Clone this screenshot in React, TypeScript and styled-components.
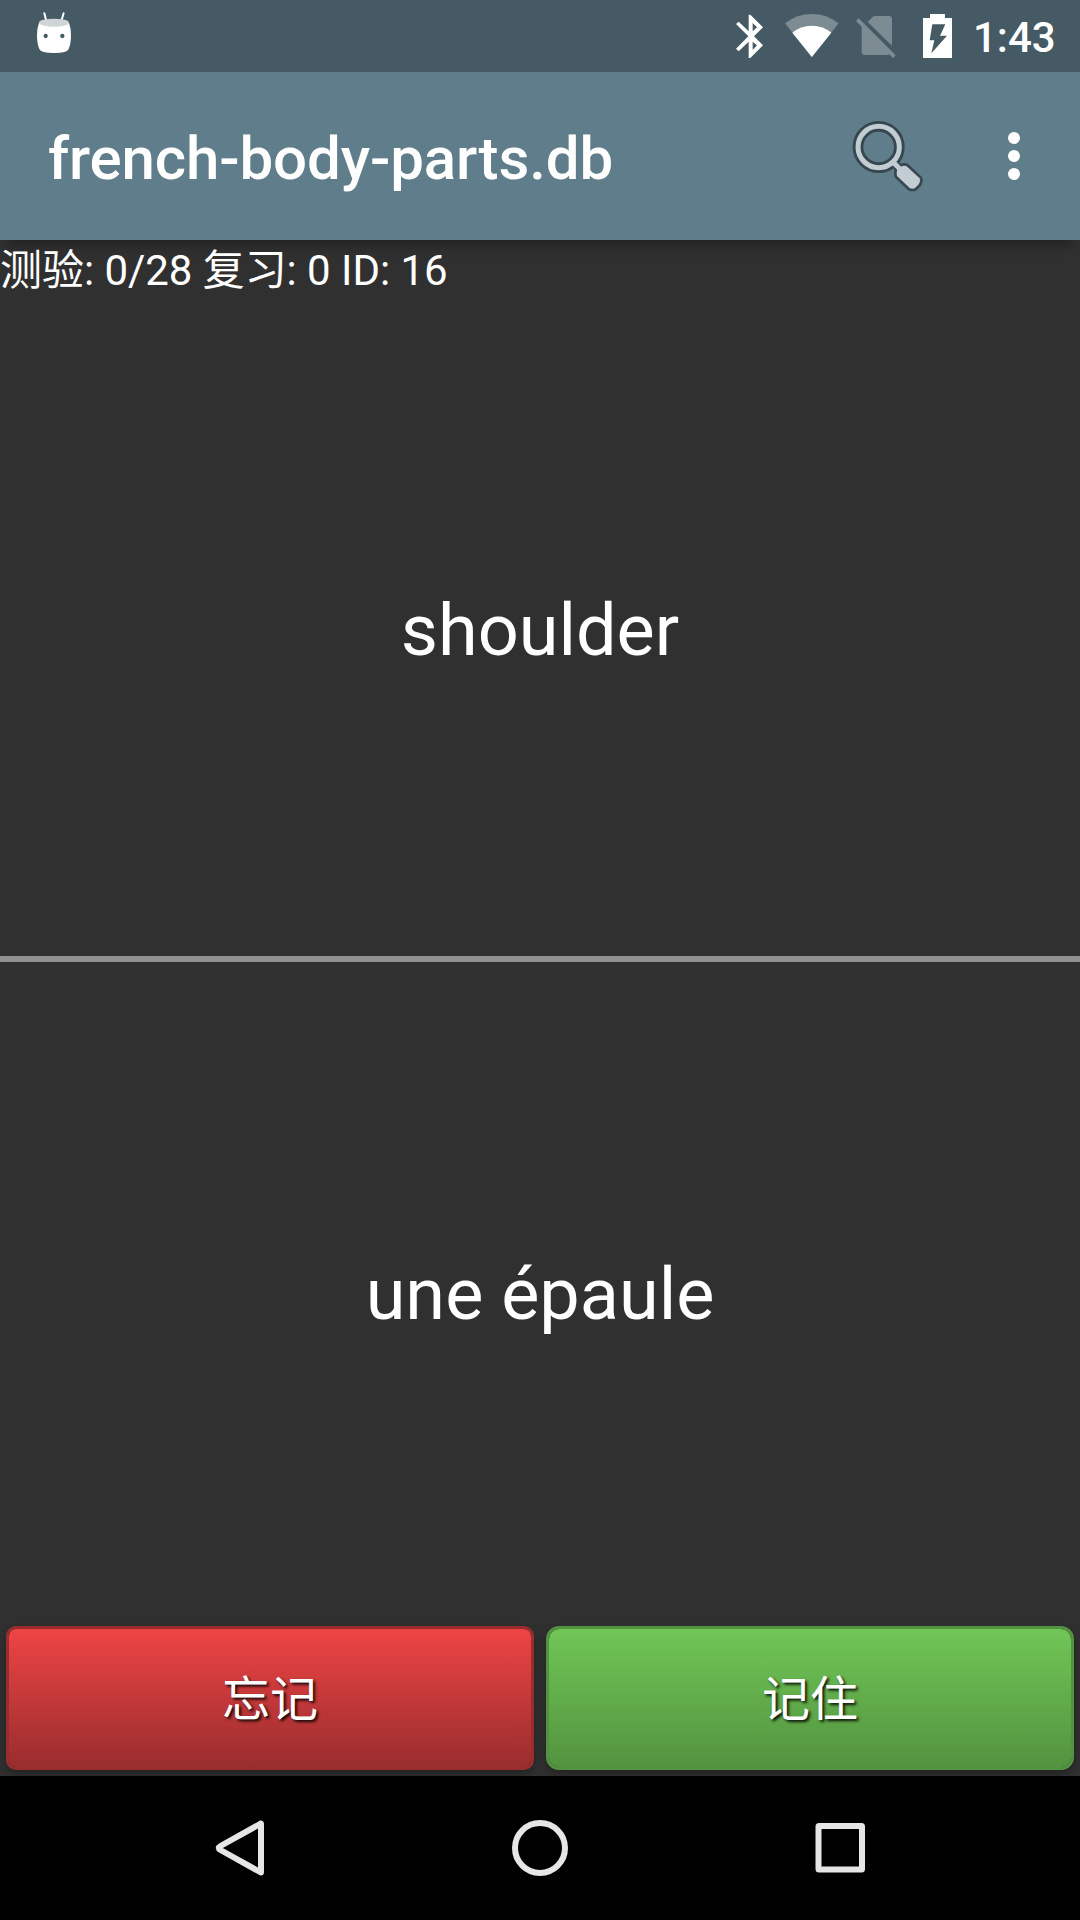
import React from "react";
import styled, { createGlobalStyle } from "styled-components";

const GlobalStyle = createGlobalStyle`
  * { box-sizing: border-box; }
  body {
    margin: 0;
    background: #303030;
    color: #fff;
    font-family: Roboto, "Noto Sans CJK SC", sans-serif;
  }
  svg { display: block; flex: none; }
`;

const Screen = styled.div`
  width: 1080px;
  height: 1920px;
  display: flex;
  flex-direction: column;
  overflow: hidden;
`;

const StatusBar = styled.header`
  height: 72px;
  flex: none;
  display: flex;
  align-items: center;
  justify-content: space-between;
  padding: 0 26px 0 36px;
  background: #455a64;
`;

const StatusIcons = styled.div`
  display: flex;
  align-items: center;
`;

const Clock = styled.span`
  margin-left: 21px;
  width: 81px;
  padding-top: 3px;
  font-size: 42px;
  font-weight: 500;
  line-height: 72px;
  white-space: nowrap;
`;

const Toolbar = styled.div`
  height: 168px;
  flex: none;
  display: flex;
  align-items: center;
  padding: 0 54px 0 48px;
  background: #607d8b;
  box-shadow: 0 12px 12px -8px rgba(0, 0, 0, 0.35);
`;

const Title = styled.h1`
  flex: 1;
  margin: 0;
  padding-top: 5px;
  font-size: 60px;
  font-weight: 500;
  line-height: 72px;
  letter-spacing: -0.13px;
`;

const IconButton = styled.button<{ $gap?: number }>`
  display: flex;
  margin: 0 ${(p) => p.$gap ?? 0}px 0 0;
  padding: 0;
  border: 0;
  background: none;
`;

const Progress = styled.div`
  flex: none;
  height: 65px;
  font-size: 42px;
  line-height: 61px;
  letter-spacing: -0.05px;
  white-space: nowrap;
`;

const Card = styled.section<{ $height: number; $shift?: number }>`
  height: ${(p) => p.$height}px;
  padding-top: ${(p) => p.$shift ?? 0}px;
  flex: none;
  display: flex;
  align-items: center;
  justify-content: center;
  font-size: 72px;
  line-height: 84px;
`;

const Divider = styled.hr`
  flex: none;
  width: 100%;
  height: 6px;
  margin: 0;
  border: 0;
  background: #909090;
`;

const Actions = styled.div`
  flex: none;
  height: 150px;
  display: flex;
  gap: 12px;
  padding: 0 6px 6px;
`;

const GradeButton = styled.button<{ $top: string; $bottom: string; $radius: number }>`
  flex: 1;
  height: 144px;
  padding: 4px 0 0;
  border: 3px solid ${(p) => p.$bottom};
  border-radius: ${(p) => p.$radius}px;
  background: linear-gradient(${(p) => p.$top}, ${(p) => p.$bottom}) padding-box;
  box-shadow: 0 4px 8px rgba(0, 0, 0, 0.3);
  color: #fff;
  font: 400 48px/56px Roboto, "Noto Sans CJK SC", sans-serif;
  text-shadow: 2px 2px 3px rgba(0, 0, 0, 0.9);
`;

const NavBar = styled.nav`
  flex: none;
  height: 144px;
  display: flex;
  align-items: center;
  justify-content: space-between;
  padding: 0 210px;
  background: #000;
  z-index: 1;
`;

const DroidIcon = () => (
  <svg width="36" height="72" viewBox="108 0 108 216">
    <path d="M133 40l6 23M191 40l-7 23" stroke="#fff" strokeWidth="6" strokeLinecap="round" />
    <path d="M117 68Q111 84 111 106Q111 132 118 147Q122 159 162 159Q202 159 206 147Q213 132 213 106Q213 84 207 68Z" fill="#fff" />
    <ellipse cx="162" cy="68" rx="45" ry="12" fill="#cfd4d7" />
    <circle cx="137" cy="108" r="6.5" fill="#455a64" />
    <circle cx="187" cy="108" r="6.5" fill="#455a64" />
  </svg>
);

const BluetoothIcon = () => (
  <svg width="27" height="72" viewBox="77 0 81 216">
    <path
      fill="#fff"
      fillRule="evenodd"
      d="M115 44h5L158 82L131 109L158 136L120 174H115V125L85 154L77 146L114 109L77 72L85 65L115 94ZM127 69V94L140 82ZM127 125V150L140 136Z"
    />
  </svg>
);

const WifiIcon = () => (
  <svg width="54" height="72" viewBox="224 0 162 216" style={{ marginLeft: 22 }}>
    <path d="M304.500 171L224 70Q260 42 304.500 42Q349 42 385 70Z" fill="#7d8b92" />
    <path d="M304.500 171L246 98Q271 77 304.500 77Q338 77 363 98Z" fill="#fff" />
  </svg>
);

const NoSimIcon = () => (
  <svg width="40" height="72" viewBox="438 0 120 216" style={{ marginLeft: 17 }}>
    <path
      fill="#7d8b92"
      d="M473 66L488 51Q491 48 495 48H537Q546 48 546 57V137ZM446 55L557 166L549 174L538 163Q535 165 530 165H464Q455 165 455 156V80L438 63Z"
    />
  </svg>
);

const BatteryIcon = () => (
  <svg width="29" height="72" viewBox="639 0 87 216" style={{ marginLeft: 27 }}>
    <path
      fill="#fff"
      fillRule="evenodd"
      d="M660 42H705V54H726V174H639V54H660ZM667 73L659 121H673L664 160L711 107H690L706 73Z"
    />
  </svg>
);

const SearchIcon = () => (
  <svg width="72" height="72" viewBox="67 60 216 216">
    <g fill="none" stroke="#37474f" strokeLinejoin="round" strokeLinecap="round">
      <circle cx="147" cy="141" r="62" strokeWidth="32" />
      <path d="M190 186L207 203" strokeWidth="26" />
      <path d="M202 211L214 200Q222 195 230 198L270 235Q273 242 268 252L256 264Q248 268 240 264L202 228Q200 219 202 211Z" strokeWidth="16" />
    </g>
    <circle cx="147" cy="141" r="62" fill="none" stroke="#c1ccd3" strokeWidth="15" />
    <path d="M190 186L210 206" stroke="#c1ccd3" strokeWidth="15" />
    <path d="M202 211L214 200Q222 195 230 198L270 235Q273 242 268 252L256 264Q248 268 240 264L202 228Q200 219 202 211Z" fill="#c1ccd3" />
  </svg>
);

const MoreIcon = () => (
  <svg width="24" height="72" viewBox="0 0 24 72">
    {[18, 36, 54].map((y) => (
      <circle key={y} cx="12" cy={y} r="6" fill="#fff" />
    ))}
  </svg>
);

const NavIcon = styled.svg.attrs({ width: 60, height: 60, viewBox: "0 0 60 60" })`
  fill: none;
  stroke: #e6e6e6;
  stroke-width: 6;
  stroke-linejoin: round;
`;

export default function App() {
  return (
    <Screen>
      <GlobalStyle />
      <StatusBar>
        <DroidIcon />
        <StatusIcons>
          <BluetoothIcon />
          <WifiIcon />
          <NoSimIcon />
          <BatteryIcon />
          <Clock>1:43</Clock>
        </StatusIcons>
      </StatusBar>
      <Toolbar>
        <Title>french-body-parts.db</Title>
        <IconButton $gap={78} aria-label="search">
          <SearchIcon />
        </IconButton>
        <IconButton aria-label="more">
          <MoreIcon />
        </IconButton>
      </Toolbar>
      <Progress>测验: 0/28 复习: 0 ID: 16</Progress>
      <Card $height={651}>shoulder</Card>
      <Divider />
      <Card $height={664} $shift={2}>une épaule</Card>
      <Actions>
        <GradeButton $top="#ef4444" $bottom="#992d2e" $radius={10}>忘记</GradeButton>
        <GradeButton $top="#70c656" $bottom="#53933f" $radius={13}>记住</GradeButton>
      </Actions>
      <NavBar>
        <NavIcon>
          <path d="M51 6V54Q51 55 50 54L10.500 32Q7 30 10.500 28L50 6Q51 5 51 6Z" />
        </NavIcon>
        <NavIcon>
          <circle cx="30" cy="30" r="25" />
        </NavIcon>
        <NavIcon>
          <rect x="8.500" y="8" width="43.500" height="43.500" rx="0.500" />
        </NavIcon>
      </NavBar>
    </Screen>
  );
}
